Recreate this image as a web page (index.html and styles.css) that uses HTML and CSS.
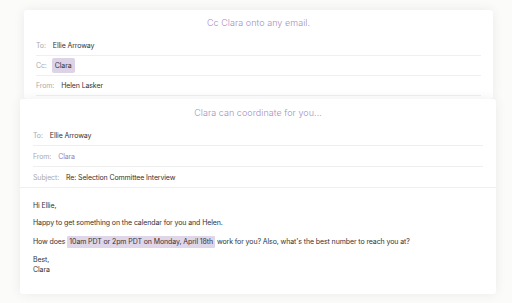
FILE: index.html
```html
<!DOCTYPE html>
<html lang="en">
<head>
    <meta charset="UTF-8">
    <meta name="viewport" content="width=device-width, initial-scale=1.0">
    <title>Clara</title>
    <link rel="stylesheet" href="styles.css">
</head>
<body>
    <div class="stage">
        <div class="card card-back">
            <div class="card-title">Cc Clara onto any email.</div>
            <div class="field">
                <span class="label">To:</span>
                <span class="value">Ellie Arroway</span>
            </div>
            <div class="field">
                <span class="label">Cc:</span>
                <span class="chip">Clara</span>
            </div>
            <div class="field">
                <span class="label">From:</span>
                <span class="value">Helen Lasker</span>
            </div>
        </div>

        <div class="card card-front">
            <div class="card-title">Clara can coordinate for you...</div>
            <div class="field">
                <span class="label">To:</span>
                <span class="value">Ellie Arroway</span>
            </div>
            <div class="field">
                <span class="label">From:</span>
                <span class="value purple">Clara</span>
            </div>
            <div class="field field-last">
                <span class="label">Subject:</span>
                <span class="value">Re: Selection Committee Interview</span>
            </div>
            <div class="message">
                <p>Hi Ellie,</p>
                <p>Happy to get something on the calendar for you and Helen.</p>
                <p>How does <span class="highlight">10am PDT or 2pm PDT on Monday, April 18th</span> work for you? Also, what's the best number to reach you at?</p>
                <p>Best,<br>Clara</p>
            </div>
        </div>
    </div>
</body>
</html>
```

FILE: styles.css
```css
body {
    margin: 0;
    background-color: #fbfbfa;
    font-family: Inter, "Liberation Sans", sans-serif;
    color: #333;
}
.stage {
    padding: 10px 16px 10px 20px;
}
.card {
    background: #fff;
    border-radius: 3px;
    box-shadow: 0 0 12px rgba(0, 0, 0, 0.07);
}
.card-back {
    margin: 0 3px 0 4px;
    padding: 0 12px 3px;
}
.card-front {
    position: relative;
    padding: 0 13px;
}
.card-title {
    font-size: 9px;
    font-weight: 300;
    letter-spacing: 0.05px;
    line-height: 12px;
    padding: 7px 0;
    text-align: center;
    color: #a68fbf;
}
.card-front .card-title {
    padding: 8px 0 6px;
}
.field {
    display: flex;
    align-items: center;
    gap: 7px;
    height: 19px;
    font-size: 7px;
    letter-spacing: -0.12px;
    border-bottom: 1px solid #efefef;
}
.card-front .field {
    height: 20px;
}
.field-last {
    margin: 0 -13px;
    padding: 0 13px;
}
.label {
    color: #aaa;
}
.value {
    color: #333;
}
.purple {
    color: #9a7fb6;
}
.chip {
    background: #ddd3e7;
    border-radius: 2px;
    padding: 3px 3px;
    margin-left: -2px;
    color: #333;
}
.message {
    padding: 13px 0 19px;
    font-size: 7px;
    letter-spacing: -0.1px;
    line-height: 10px;
}
.message p {
    margin: 0 0 7px;
}
.message p:nth-child(3) {
    margin: 8px 0 7px;
}
.message p:last-child {
    margin-bottom: 0;
}
.highlight {
    display: inline-block;
    background: #e0d6ea;
    border-radius: 1px;
    padding: 1px 2px;
    line-height: 10px;
}
```
